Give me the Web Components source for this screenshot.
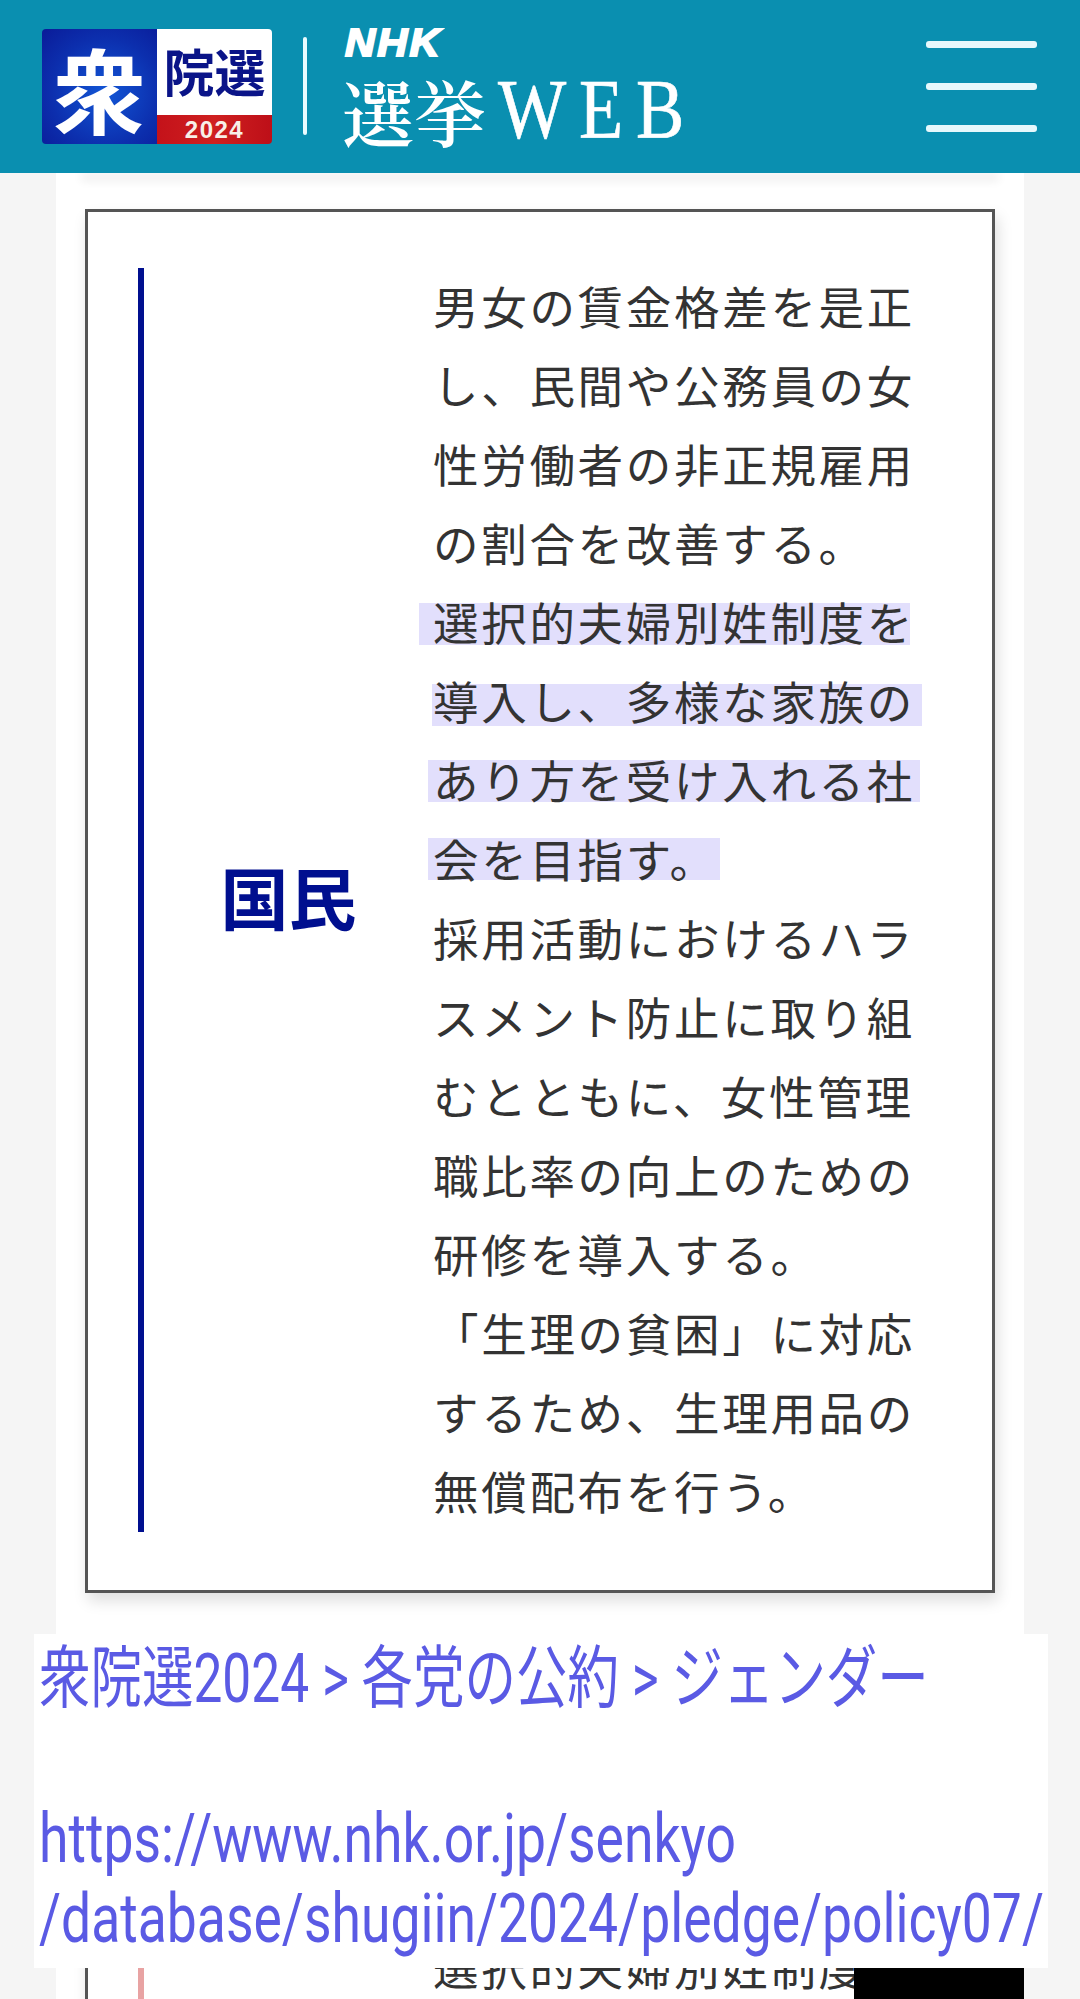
<!DOCTYPE html>
<html lang="ja">
<head>
<meta charset="utf-8">
<title>選挙WEB</title>
<style>
  html, body { margin: 0; padding: 0; background: #f5f5f5; }
  body { width: 1080px; height: 1999px; overflow: hidden; position: relative; font-family: "Noto Sans CJK JP", "Noto Sans", sans-serif; }
</style>
</head>
<body>
<senkyo-header></senkyo-header>
<page-column>
  <pledge-card party="国民" accent="#000f8f" name-color="#000f8f">
    <pledge-line>男女の賃金格差を是正</pledge-line>
    <pledge-line>し、民間や公務員の女</pledge-line>
    <pledge-line>性労働者の非正規雇用</pledge-line>
    <pledge-line>の割合を改善する。</pledge-line>
    <pledge-line style="--x:-14px;--w:491px;--y:19px" marked>選択的夫婦別姓制度を</pledge-line>
    <pledge-line style="--x:-1px;--w:490px;--y:21px" marked>導入し、多様な家族の</pledge-line>
    <pledge-line style="--x:-5px;--w:492px;--y:18px" marked>あり方を受け入れる社</pledge-line>
    <pledge-line style="--x:-5px;--w:292px;--y:17px" marked>会を目指す。</pledge-line>
    <pledge-line>採用活動におけるハラ</pledge-line>
    <pledge-line>スメント防止に取り組</pledge-line>
    <pledge-line>むとともに、女性管理</pledge-line>
    <pledge-line>職比率の向上のための</pledge-line>
    <pledge-line>研修を導入する。</pledge-line>
    <pledge-line>「生理の貧困」に対応</pledge-line>
    <pledge-line>するため、生理用品の</pledge-line>
    <pledge-line>無償配布を行う。</pledge-line>
  </pledge-card>
  <pledge-card accent="#e8a3a3" class="next">
    <pledge-line>選択的夫婦別姓制度を</pledge-line>
  </pledge-card>
</page-column>
<redact-box></redact-box>
<source-note></source-note>

<script>
class SenkyoHeader extends HTMLElement {
  constructor() {
    super();
    this.attachShadow({ mode: 'open' });
    this.shadowRoot.innerHTML = `
      <style>
        :host { display: flex; align-items: flex-start; height: 173px; background: #0a8fb0; position: relative; z-index: 2; }
        .logo { display: flex; width: 230px; height: 115px; margin: 29px 0 0 42px; flex: none; }
        .shu { width: 115px; display: flex; align-items: center; justify-content: center; color: #fff; font-weight: 700; font-size: 92px; line-height: 1; border-radius: 4px 0 0 4px; background: radial-gradient(circle at 55% 55%, #1256d6 0%, #0c2fae 60%, #0a1b98 100%); }
        .right { width: 115px; display: flex; flex-direction: column; }
        .inn { height: 86px; background: #fff; color: #0a1488; font-weight: 700; font-size: 51px; line-height: 82px; text-align: center; white-space: nowrap; border-radius: 0 4px 0 0; }
        .year { flex: 1; background: linear-gradient(90deg, #c4121a, #cf2020 50%, #bd0f18); color: #f8efe8; font: 700 24px/29px "Liberation Sans", sans-serif; text-align: center; letter-spacing: 1.5px; border-radius: 0 0 4px 0; }
        .rule { width: 4px; height: 98px; margin: 37px 0 0 31px; background: #e9fbff; border-radius: 2px; flex: none; }
        .brand { margin: 28px 0 0 37px; color: #fff; flex: none; }
        .nhk { font: italic 900 39px/29px "Liberation Sans", sans-serif; -webkit-text-stroke: 2px #fff; letter-spacing: 2px; height: 29px; margin-left: 1px; transform-origin: left center; transform: scaleX(1.07); }
        .title { display: flex; align-items: center; height: 66px; margin-top: 20px; margin-left: -2px; white-space: nowrap; }
        .kan { font-family: "Noto Serif CJK JP", "Noto Sans CJK JP", sans-serif; font-size: 72px; line-height: 66px; font-weight: 600; }
        .web { display: inline-block; font: 400 84px/66px "Liberation Serif", serif; -webkit-text-stroke: .7px #fff; letter-spacing: 15px; margin-left: 12px; transform-origin: left center; transform: scaleX(.86); }
        menu-button { margin-left: auto; margin-right: 43px; margin-top: 41px; }
      </style>
      <div class="logo">
        <div class="shu">衆</div>
        <div class="right"><div class="inn">院選</div><div class="year">2024</div></div>
      </div>
      <div class="rule"></div>
      <div class="brand">
        <div class="nhk">NHK</div>
        <div class="title"><span class="kan">選挙</span><span class="web">WEB</span></div>
      </div>
      <menu-button></menu-button>
    `;
  }
}

class MenuButton extends HTMLElement {
  constructor() {
    super();
    this.attachShadow({ mode: 'open' });
    this.shadowRoot.innerHTML = `
      <style>
        :host { display: flex; flex-direction: column; gap: 35px; width: 111px; }
        i { display: block; height: 7px; background: #e6f8fc; border-radius: 3px; }
      </style>
      <i></i><i></i><i></i>
    `;
  }
}

class PageColumn extends HTMLElement {
  constructor() {
    super();
    this.attachShadow({ mode: 'open' });
    this.shadowRoot.innerHTML = `
      <style>
        :host { display: block; width: 968px; height: 1826px; margin-left: 56px; background: #fff; overflow: hidden; position: relative; }
        .prev { height: 0; margin: 0 29px 36px; box-shadow: 0 4px 10px 4px rgba(0,0,0,.07); }
        .cards { display: flex; flex-direction: column; gap: 277px; padding: 0 29px 0 29px; }
      </style>
      <div class="prev"></div>
      <div class="cards"><slot></slot></div>
    `;
  }
}

class PledgeCard extends HTMLElement {
  constructor() {
    super();
    this.attachShadow({ mode: 'open' });
    this.shadowRoot.innerHTML = `
      <style>
        :host { display: block; flex: none; }
        .box { display: flex; box-sizing: border-box; width: 910px; padding: 56px 0 58px 50px; border: 3px solid #555; background: #fff; box-shadow: 3px 8px 14px rgba(0,0,0,.13); }
        .bar { display: flex; align-items: center; justify-content: center; width: 295px; flex: none; box-sizing: border-box; border-left: 6px solid var(--accent); padding-bottom: 10px; font-size: 68px; font-weight: 700; }
        .lines { flex: 1; }
      </style>
      <div class="box">
        <div class="bar"></div>
        <div class="lines"><slot></slot></div>
      </div>
    `;
  }
  connectedCallback() {
    this.style.setProperty('--accent', this.getAttribute('accent'));
    const bar = this.shadowRoot.querySelector('.bar');
    bar.textContent = this.getAttribute('party') || '';
    bar.style.color = this.getAttribute('name-color') || '';
  }
}

class PledgeLine extends HTMLElement {
  constructor() {
    super();
    this.attachShadow({ mode: 'open' });
    this.shadowRoot.innerHTML = `
      <style>
        :host { display: block; position: relative; height: 79px; font-size: 45.5px; line-height: 75px; letter-spacing: 2.7px; color: #333; white-space: nowrap; font-weight: 400; }
        :host([marked])::before { content: ""; position: absolute; z-index: 0; left: var(--x); width: var(--w); top: var(--y); height: 42px; background: #e2dffc; }
        span { position: relative; }
      </style>
      <span><slot></slot></span>
    `;
  }
}

class RedactBox extends HTMLElement {
  constructor() {
    super();
    this.attachShadow({ mode: 'open' });
    this.shadowRoot.innerHTML = `
      <style>
        :host { display: block; position: absolute; left: 854px; top: 1968px; width: 170px; height: 31px; background: #000; z-index: 3; }
      </style>
    `;
  }
}

class SourceNote extends HTMLElement {
  constructor() {
    super();
    this.attachShadow({ mode: 'open' });
    this.shadowRoot.innerHTML = `
      <style>
        :host { display: block; position: absolute; left: 34px; top: 1634px; width: 1014px; height: 334px; box-sizing: border-box; padding: 5px 0 0 5px; background: #fff; z-index: 3; }
        div { font: 400 68px/80px Roboto, "Noto Sans CJK JP", sans-serif; color: #5a5ae4; white-space: nowrap; height: 80px; transform-origin: left top; transform: scaleX(.786); }
        div.cjk { transform: scaleX(.757); margin-bottom: 80px; }
      </style>
      <div class="cjk">衆院選2024 &gt; 各党の公約 &gt; ジェンダー</div>
      <div>https://www.nhk.or.jp/senkyo</div>
      <div>/database/shugiin/2024/pledge/policy07/</div>
    `;
  }
}

customElements.define('senkyo-header', SenkyoHeader);
customElements.define('menu-button', MenuButton);
customElements.define('page-column', PageColumn);
customElements.define('pledge-card', PledgeCard);
customElements.define('pledge-line', PledgeLine);
customElements.define('redact-box', RedactBox);
customElements.define('source-note', SourceNote);
</script>
</body>
</html>
